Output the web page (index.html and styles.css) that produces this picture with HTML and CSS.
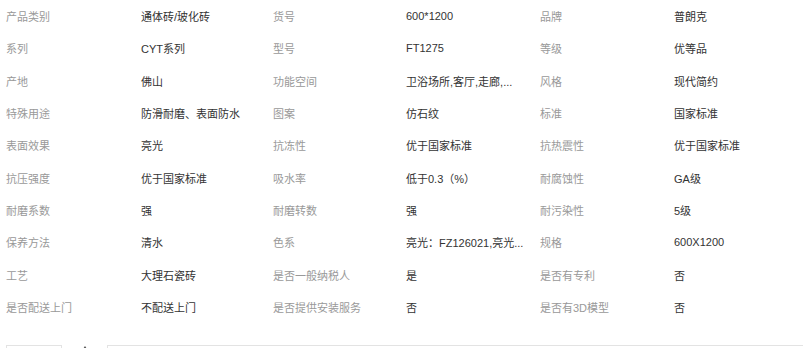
FILE: index.html
```html
<!DOCTYPE html>
<html lang="zh-CN">
<head>
<meta charset="utf-8">
<title>商品参数</title>
<link rel="stylesheet" href="styles.css">
</head>
<body>
<div class="params">
  <span class="k">产品类别</span><span class="v">通体砖/玻化砖</span><span class="k">货号</span><span class="v">600*1200</span><span class="k">品牌</span><span class="v">普朗克</span>
  <span class="k">系列</span><span class="v">CYT系列</span><span class="k">型号</span><span class="v">FT1275</span><span class="k">等级</span><span class="v">优等品</span>
  <span class="k">产地</span><span class="v">佛山</span><span class="k">功能空间</span><span class="v">卫浴场所,客厅,走廊,...</span><span class="k">风格</span><span class="v">现代简约</span>
  <span class="k">特殊用途</span><span class="v">防滑耐磨、表面防水</span><span class="k">图案</span><span class="v">仿石纹</span><span class="k">标准</span><span class="v">国家标准</span>
  <span class="k">表面效果</span><span class="v">亮光</span><span class="k">抗冻性</span><span class="v">优于国家标准</span><span class="k">抗热震性</span><span class="v">优于国家标准</span>
  <span class="k">抗压强度</span><span class="v">优于国家标准</span><span class="k">吸水率</span><span class="v">低于0.3（%）</span><span class="k">耐腐蚀性</span><span class="v">GA级</span>
  <span class="k">耐磨系数</span><span class="v">强</span><span class="k">耐磨转数</span><span class="v">强</span><span class="k">耐污染性</span><span class="v">5级</span>
  <span class="k">保养方法</span><span class="v">清水</span><span class="k">色系</span><span class="v">亮光：FZ126021,亮光...</span><span class="k">规格</span><span class="v">600X1200</span>
  <span class="k">工艺</span><span class="v">大理石瓷砖</span><span class="k">是否一般纳税人</span><span class="v">是</span><span class="k">是否有专利</span><span class="v">否</span>
  <span class="k">是否配送上门</span><span class="v">不配送上门</span><span class="k">是否提供安装服务</span><span class="v">否</span><span class="k">是否有3D模型</span><span class="v">否</span>
</div>
<div class="bottom">
  <div class="box-small"></div>
  <div class="icon"><svg width="6" height="4" viewBox="0 0 6 4"><path d="M1 4 L3 1 L5 4 Z" fill="#555"/></svg></div>
  <div class="box-wide"></div>
</div>
</body>
</html>
```
FILE: styles.css
```css
html, body {
  margin: 0;
  padding: 0;
  background: #fff;
  overflow: hidden;
}
body {
  font-family: "Liberation Sans", "Noto Sans CJK SC", sans-serif;
  font-size: 11px;
  padding-left: 6px;
}
.params {
  display: grid;
  grid-template-columns: 135px 132px 133px 134px 134px 1fr;
  grid-auto-rows: 32.33px;
  align-items: center;
}
.k {
  color: #999;
  white-space: nowrap;
}
.v {
  color: #333;
  white-space: nowrap;
}
.bottom {
  display: flex;
  align-items: flex-start;
  margin-top: 21.7px;
  height: 20px;
}
.box-small {
  width: 56px;
  height: 30px;
  border: 1px solid #e3e3e3;
  box-sizing: border-box;
}
.icon {
  width: 45px;
  display: flex;
  justify-content: center;
  padding-left: 0;
}
.icon svg {
  display: block;
  margin-top: 0;
}
.box-wide {
  flex: 1;
  height: 30px;
  border: 1px solid #e3e3e3;
  border-right: none;
  box-sizing: border-box;
}
```
